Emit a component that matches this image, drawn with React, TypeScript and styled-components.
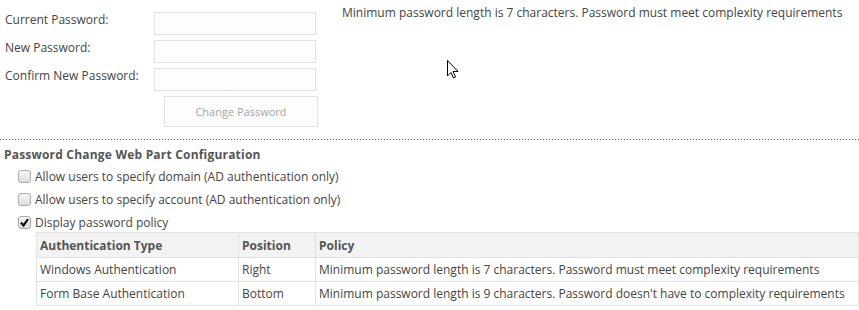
import styled, { createGlobalStyle } from "styled-components";

const GlobalStyle = createGlobalStyle`
  html, body {
    margin: 0;
    padding: 0;
    background: #ffffff;
  }
  body {
    font-family: "Open Sans", "Liberation Sans", sans-serif;
    font-size: 12px;
    color: #444444;
  }
`;

const Page = styled.div`
  position: relative;
  width: 859px;
  height: 310px;
  overflow: hidden;
`;

const TopSection = styled.div`
  display: flex;
  align-items: flex-start;
  padding: 12px 0 12px 5px;
`;

const Divider = styled.div`
  height: 1px;
  background: repeating-linear-gradient(to right, #3a5fc4 0 1px, transparent 1px 3px);
`;

const Form = styled.div`
  display: grid;
  grid-template-columns: 149px 162px;
  row-gap: 5px;
`;

const Label = styled.label`
  line-height: 16px;
  white-space: nowrap;
`;

const Input = styled.input`
  box-sizing: border-box;
  width: 162px;
  height: 23px;
  margin: 0;
  border: 1px solid #e1e1e1;
  background: #fdfdfd;
`;

const Button = styled.button`
  grid-column: 2;
  box-sizing: border-box;
  width: 154px;
  height: 31px;
  margin: 0 0 0 10px;
  border: 1px solid #e1e1e1;
  background: #fdfdfd;
  color: #a6a6a6;
  font-family: "Open Sans", "Liberation Sans", sans-serif;
  font-size: 11px;
`;

const Policy = styled.div`
  margin-left: 26px;
  margin-top: -8px;
  line-height: 18px;
  white-space: nowrap;
`;

const Config = styled.div`
  padding: 5px 0 0 4px;
`;

const Heading = styled.div`
  font-weight: 700;
  color: #555555;
  line-height: 20px;
  letter-spacing: 0.2px;
`;

const OptionRow = styled.div`
  display: flex;
  align-items: center;
  gap: 4px;
  height: 23px;
  padding-left: 14px;
`;

const Box = styled.span`
  box-sizing: border-box;
  display: inline-flex;
  align-items: center;
  justify-content: center;
  width: 13px;
  height: 13px;
  border: 1px solid #a9a9a9;
  border-radius: 3px;
  background: linear-gradient(#f7f7f7, #dcdcdc);
`;

const Table = styled.table`
  border-collapse: collapse;
  margin: -2px 0 0 32px;
  width: 823px;
  table-layout: fixed;
`;

const Col = styled.col<{ $width?: number }>`
  width: ${(p) => (p.$width ? `${p.$width}px` : "auto")};
`;

const HeadCell = styled.th`
  height: 24px;
  padding: 0 3px;
  text-align: left;
  font-weight: 700;
  color: #555555;
  background: #f3f3f3;
  border: 1px solid #e1e1e1;
  white-space: nowrap;
`;

const Cell = styled.td`
  height: 23px;
  padding: 0 3px;
  border: 1px solid #e1e1e1;
  white-space: nowrap;
  overflow: hidden;
`;

const Cursor = styled.svg`
  position: absolute;
  left: 447px;
  top: 60px;
`;

const options = [
  { text: "Allow users to specify domain (AD authentication only)", checked: false },
  { text: "Allow users to specify account (AD authentication only)", checked: false },
  { text: "Display password policy", checked: true },
];

const policies = [
  {
    type: "Windows Authentication",
    position: "Right",
    policy: "Minimum password length is 7 characters. Password must meet complexity requirements",
  },
  {
    type: "Form Base Authentication",
    position: "Bottom",
    policy: "Minimum password length is 9 characters. Password doesn't have to complexity requirements",
  },
];

const App = () => {
  return (
    <>
      <GlobalStyle />
      <Page>
        <TopSection>
          <Form>
            <Label>Current Password:</Label>
            <Input type="password" />
            <Label>New Password:</Label>
            <Input type="password" />
            <Label>Confirm New Password:</Label>
            <Input type="password" />
            <Button>Change Password</Button>
          </Form>
          <Policy>
            Minimum password length is 7 characters. Password must meet complexity requirements
          </Policy>
        </TopSection>
        <Divider />
        <Config>
          <Heading>Password Change Web Part Configuration</Heading>
          {options.map((o) => (
            <OptionRow key={o.text}>
              <Box>
                {o.checked && (
                  <svg width="9" height="9" viewBox="0 0 9 9">
                    <path d="M1 4.5 L3.5 7.5 L8 1.2" fill="none" stroke="#111" strokeWidth="2.2" />
                  </svg>
                )}
              </Box>
              {o.text}
            </OptionRow>
          ))}
          <Table>
            <colgroup>
              <Col $width={202} />
              <Col $width={77} />
              <Col />
            </colgroup>
            <thead>
              <tr>
                <HeadCell>Authentication Type</HeadCell>
                <HeadCell>Position</HeadCell>
                <HeadCell>Policy</HeadCell>
              </tr>
            </thead>
            <tbody>
              {policies.map((p) => (
                <tr key={p.type}>
                  <Cell>{p.type}</Cell>
                  <Cell>{p.position}</Cell>
                  <Cell>{p.policy}</Cell>
                </tr>
              ))}
            </tbody>
          </Table>
        </Config>
        <Cursor width="12" height="19" viewBox="0 0 12 19">
          <path
            d="M0.5 0.5 L0.5 16 L4 12.5 L6.5 18 L8.5 17 L6 11.5 L11 11.5 Z"
            fill="#ffffff"
            stroke="#000000"
            strokeWidth="1"
          />
        </Cursor>
      </Page>
    </>
  );
};

export default App;
